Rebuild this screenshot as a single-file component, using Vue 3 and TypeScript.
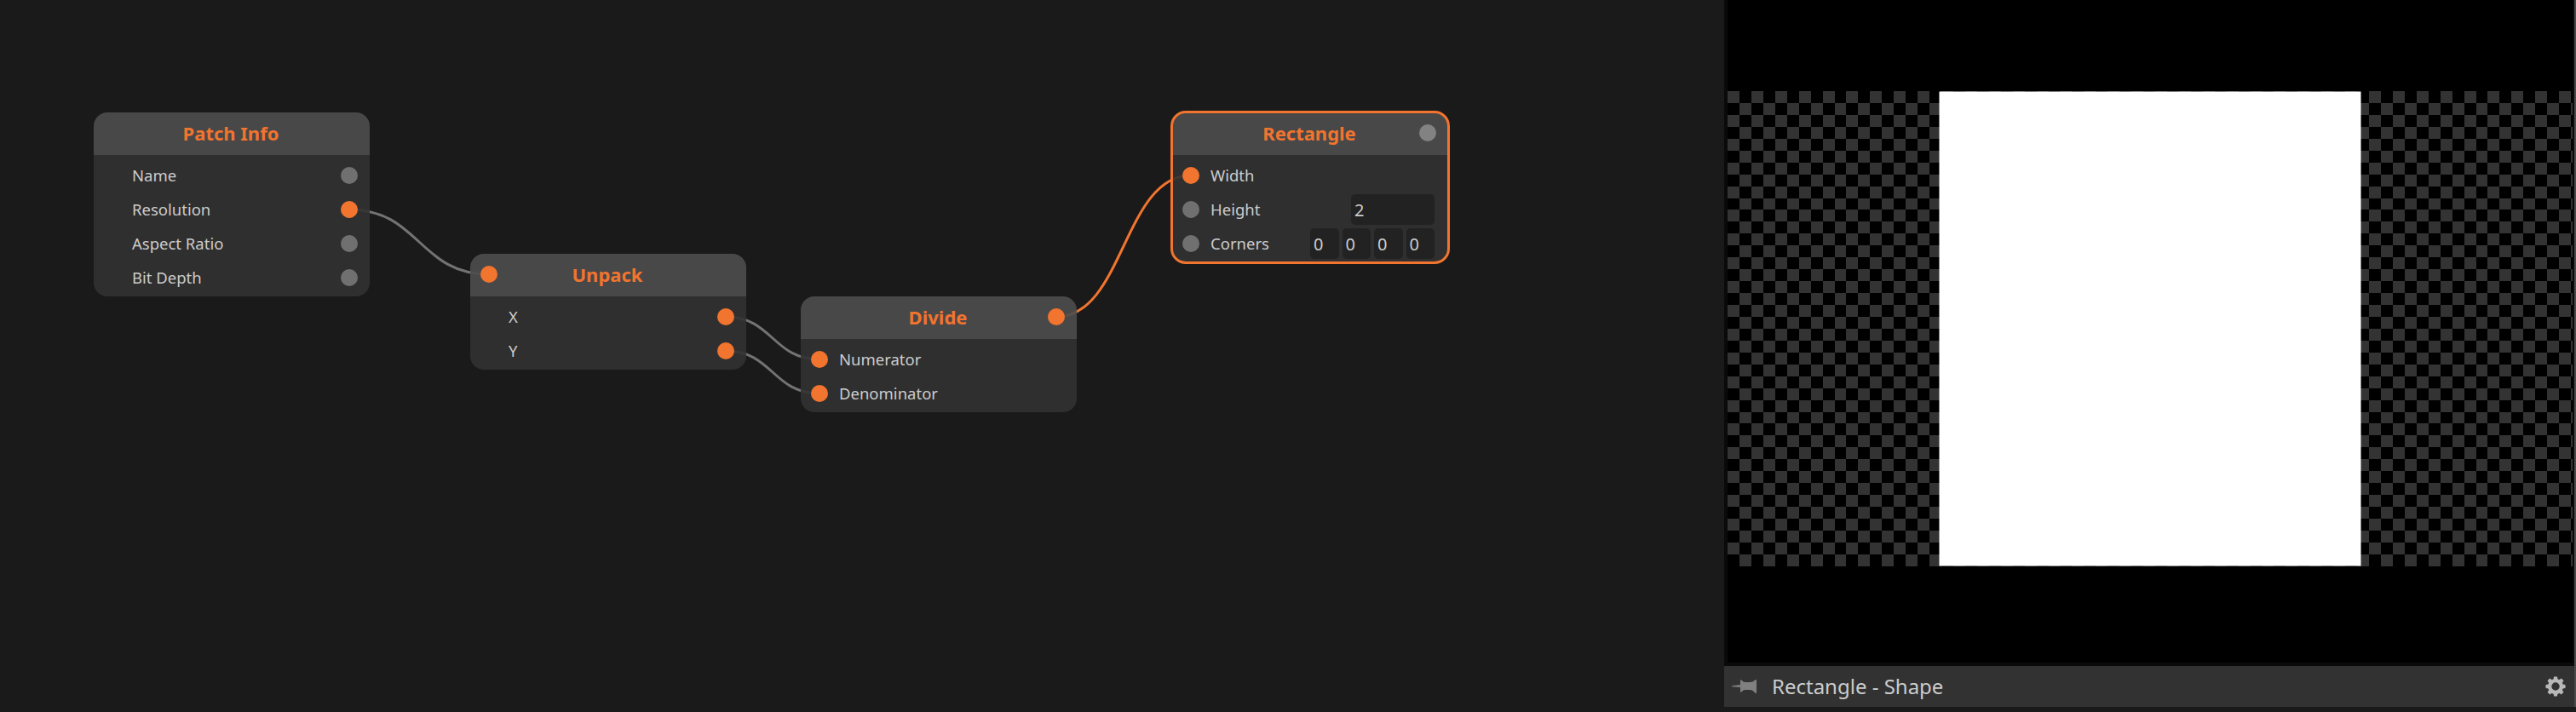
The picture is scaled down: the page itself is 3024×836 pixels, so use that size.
<script setup lang="ts">
interface Row {
  label: string
  input?: boolean
  output?: boolean
  linked?: boolean
  values?: string[]
}
interface GraphNode {
  title: string
  x: number
  y: number
  selected?: boolean
  headIn?: boolean
  headOut?: boolean
  headLinked?: boolean
  rows: Row[]
}

const nodes: GraphNode[] = [
  {
    title: 'Patch Info', x: 110, y: 132,
    rows: [
      { label: 'Name', output: true },
      { label: 'Resolution', output: true, linked: true },
      { label: 'Aspect Ratio', output: true },
      { label: 'Bit Depth', output: true },
    ],
  },
  {
    title: 'Unpack', x: 552, y: 298, headIn: true, headLinked: true,
    rows: [
      { label: 'X', output: true, linked: true },
      { label: 'Y', output: true, linked: true },
    ],
  },
  {
    title: 'Divide', x: 940, y: 348, headOut: true, headLinked: true,
    rows: [
      { label: 'Numerator', input: true, linked: true },
      { label: 'Denominator', input: true, linked: true },
    ],
  },
  {
    title: 'Rectangle', x: 1376, y: 132, headOut: true, selected: true,
    rows: [
      { label: 'Width', input: true, linked: true },
      { label: 'Height', input: true, values: ['2'] },
      { label: 'Corners', input: true, values: ['0', '0', '0', '0'] },
    ],
  },
]

interface Cable { from: [number, number]; to: [number, number]; active?: boolean }
const cables: Cable[] = [
  { from: [410, 246], to: [574, 322] },
  { from: [852, 372], to: [962, 422] },
  { from: [852, 412], to: [962, 462] },
  { from: [1240, 372], to: [1398, 206], active: true },
]
function cablePath(c: Cable): string {
  const [x1, y1] = c.from
  const [x2, y2] = c.to
  const mx = (x1 + x2) / 2
  return `M${x1} ${y1}C${mx} ${y1} ${mx} ${y2} ${x2} ${y2}`
}

// Transparency grid behind the rendered shape
const W = 992
const H = 558
function checker(): string {
  const cell = 13.945
  let d = ''
  for (let r = 0; r < 40; r++) {
    const y0 = Math.round(r * cell)
    const y1 = Math.min(H, Math.round((r + 1) * cell))
    for (let c = r % 2; c < 72; c += 2) {
      const x0 = Math.round(c * cell)
      const x1 = Math.min(W, Math.round((c + 1) * cell))
      d += `M${x0} ${y0}H${x1}V${y1}H${x0}Z`
    }
  }
  return d
}
const checkerPath = checker()
const gearTeeth = [0, 45, 90, 135, 180, 225, 270, 315]
</script>

<template>
  <div class="app">
    <main class="graph">
      <svg class="cables" width="2024" height="836">
        <path v-for="(c, i) in cables" :key="i" :d="cablePath(c)" :class="{ active: c.active }" />
      </svg>
      <section
        v-for="n in nodes" :key="n.title" class="node" :class="{ selected: n.selected }"
        :style="{ left: n.x + 'px', top: n.y + 'px' }"
      >
        <header>
          <i class="port" :class="{ linked: n.headLinked, hidden: !n.headIn }" />
          <h2>{{ n.title }}</h2>
          <i class="port light" :class="{ linked: n.headLinked, hidden: !n.headOut }" />
        </header>
        <div class="rows">
          <div v-for="r in n.rows" :key="r.label" class="row">
            <i class="port" :class="{ linked: r.linked, hidden: !r.input }" />
            <span class="label">{{ r.label }}</span>
            <div v-if="r.values" class="fields" :class="{ multi: r.values.length > 1 }">
              <span v-for="(v, i) in r.values" :key="i" class="field">{{ v }}</span>
            </div>
            <i v-if="r.output" class="port" :class="{ linked: r.linked }" />
          </div>
        </div>
      </section>
    </main>
    <aside class="viewer">
      <div class="stage">
        <svg class="preview" :width="W" :height="H" :viewBox="`0 0 ${W} ${H}`">
          <path :d="checkerPath" fill="#333" shape-rendering="crispEdges" />
          <rect x="248.5" y="0.5" width="495" height="557" fill="#fff" />
        </svg>
      </div>
      <footer>
        <svg class="pin" width="30" height="18" viewBox="0 0 30 18">
          <path d="M0 8.2L10 7V1.2Q11 1 12 2Q13 4 16 4H21Q25 4 27 1.5L29 1V17L27 16.5Q25 13 21 13H16Q13 13 12 15Q11 16 10 15.8V10L0 9.2Z" fill="#808080" />
        </svg>
        <span class="caption">Rectangle - Shape</span>
        <svg class="gear" width="24" height="24" viewBox="-12 -12 24 24">
          <circle r="6.9" fill="none" stroke="#b8b8b8" stroke-width="4.4" />
          <path v-for="a in gearTeeth" :key="a" d="M-2.6-8L-1.9-11.5H1.9L2.6-8Z" fill="#b8b8b8" :transform="`rotate(${a})`" />
        </svg>
      </footer>
    </aside>
    <div class="edge" />
  </div>
</template>

<style>
body {
  background: #1a1a1a;
  overflow: hidden;
}
</style>

<style scoped>
.app {
  display: flex;
  width: 3024px;
  height: 836px;
  background: #1a1a1a;
  font-family: "Noto Sans", sans-serif;
  color: #ccc;
}
.graph {
  position: relative;
  flex: 0 0 2024px;
}
.cables {
  position: absolute;
  left: 0;
  top: 0;
}
.cables path {
  fill: none;
  stroke: #737373;
  stroke-width: 3;
}
.cables path.active {
  stroke: #f1742f;
}
.node {
  position: absolute;
  width: 324px;
  border-radius: 16px;
}
.node.selected::after {
  content: "";
  position: absolute;
  inset: -2px;
  border: 3px solid #f1742f;
  border-radius: 18px;
}
header {
  display: flex;
  align-items: flex-start;
  box-sizing: border-box;
  height: 50px;
  padding: 14px 14px 0 12px;
  background: rgba(77, 77, 77, 0.91);
  border-radius: 16px 16px 0 0;
}
h2 {
  flex: 1;
  margin: -5px 0 0;
  text-align: center;
  font-size: 22px;
  line-height: 30px;
  font-weight: 700;
  color: #f1742f;
}
.rows {
  padding: 4px 14px 2px 12px;
  background: rgba(50, 50, 50, 0.9);
  border-radius: 0 0 16px 16px;
}
.row {
  display: flex;
  align-items: center;
  height: 40px;
}
.port {
  flex: 0 0 20px;
  height: 20px;
  border-radius: 50%;
  background: #707070;
}
.port.light {
  background: #828282;
}
.port.linked {
  background: #f1742f;
}
.port.hidden {
  visibility: hidden;
}
.label {
  flex: 1;
  margin-left: 13px;
  font-size: 18.5px;
  line-height: 26px;
}
.fields {
  display: flex;
  gap: 4px;
  width: 98px;
  margin-right: 2px;
}
.fields.multi {
  width: 146px;
}
.field {
  flex: 1;
  height: 36px;
  box-sizing: border-box;
  padding-left: 4px;
  border-radius: 5px;
  background: #222;
  font-size: 20px;
  line-height: 37px;
}
.viewer {
  display: flex;
  flex-direction: column;
  flex: 0 0 998px;
}
.stage {
  box-sizing: border-box;
  height: 782px;
  padding-top: 107px;
  background: #000;
  border: solid #0a0a0a;
  border-width: 0 2px 4px 4px;
}
.preview {
  display: block;
}
footer {
  display: flex;
  align-items: center;
  box-sizing: border-box;
  height: 48px;
  padding: 0 10px 0 9px;
  background: #323232;
}
.caption {
  flex: 1;
  margin-left: 17px;
  font-size: 24px;
  line-height: 34px;
}
.edge {
  flex: 0 0 2px;
  height: 830px;
  background: #4a4a4a;
}
</style>
